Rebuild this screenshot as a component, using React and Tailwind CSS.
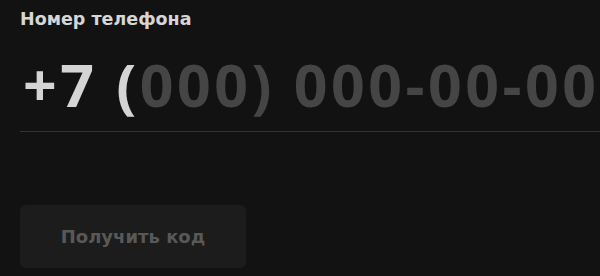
export default function App() {
  return (
    <div className="w-[600px] h-[276px] bg-[#121212] overflow-hidden" style={{ fontFamily: '"Open Sans", "Liberation Sans", sans-serif' }}>
      <div className="pl-5 pt-[7px]">
        <label className="block font-['DejaVu_Sans',sans-serif] text-[17.5px] font-bold leading-[24px] text-[#d6d6d6]">Номер телефона</label>
        <div className="mt-[18px] pl-[3px] h-[83px] border-b border-[#343434] flex items-start">
          <span className="text-[59px] font-bold leading-[70px] tracking-[3.5px] whitespace-nowrap">
            <span className="text-[#d4d4d4]">+7 (</span>
            <span className="text-[#454545]">000) 000-00-00</span>
          </span>
        </div>
        <button className="mt-[73px] w-[226px] h-[63px] rounded-md bg-[#1c1c1c] font-['DejaVu_Sans',sans-serif] text-[18px] font-bold text-[#585858]">
          Получить код
        </button>
      </div>
    </div>
  )
}
